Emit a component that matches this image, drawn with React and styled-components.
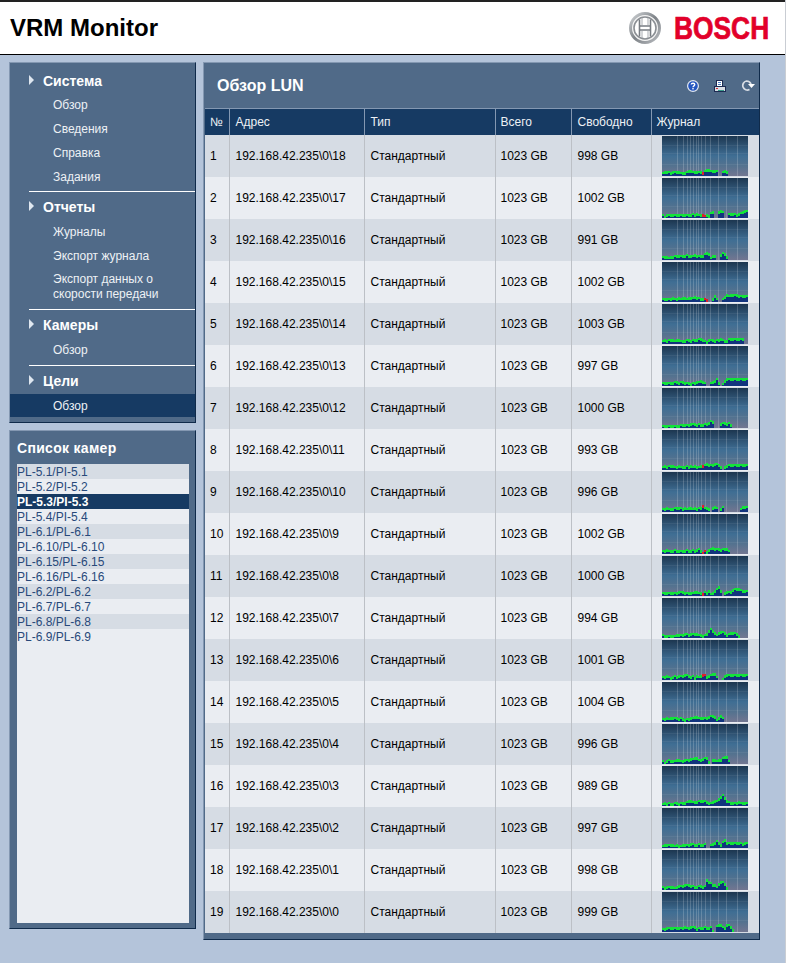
import React from "react";
import styled, { createGlobalStyle } from "styled-components";

const GlobalStyle = createGlobalStyle`
  html, body {
    margin: 0;
    padding: 0;
    background: #b4c4da;
    font-family: "Liberation Sans", Arial, sans-serif;
  }
`;

const Shell = styled.div`
  width: 785px;
  height: 963px;
  border-right: 1px solid #c9cdd3;
  overflow: hidden;
`;
const Header = styled.header`
  height: 52px;
  background: #fff;
  border-top: 2px solid #222;
  border-bottom: 1px solid #000;
  display: flex;
  align-items: center;
  justify-content: space-between;
  padding: 0 16px 0 10px;
`;
const AppTitle = styled.h1`
  margin: 0;
  font-size: 24px;
  font-weight: bold;
  color: #000;
`;
const Logo = styled.div`
  display: flex;
  align-items: center;
  gap: 13px;
  margin-right: 1px;
`;
const Wordmark = styled.span`
  display: block;
  width: 94px;
  margin-top: 2px;
  font-size: 31px;
  line-height: 32px;
  font-weight: bold;
  color: #e2002a;
  -webkit-text-stroke: 0.7px #e2002a;
  transform: scaleX(0.85);
  transform-origin: left center;
  white-space: nowrap;
`;
const Content = styled.div`
  display: flex;
  gap: 7px;
  padding: 7px 0 0 9px;
`;
const Sidebar = styled.div`
  width: 187px;
  display: flex;
  flex-direction: column;
  gap: 7px;
`;
const Panel = styled.section`
  background: #506a88;
  border-top: 1px solid #8498b2;
  border-left: 1px solid #8498b2;
  border-right: 1px solid #0f2a4a;
  border-bottom: 1px solid #0f2a4a;
`;
const Nav = styled(Panel)`
  height: 361px;
  box-sizing: border-box;
  padding-top: 6px;
`;
const Group = styled.div`
  margin: ${(p) => p.$top}px 0 0 19px;
  border-top: 1px solid #fff;
  padding-top: 3px;
`;
const GroupTitle = styled.div`
  display: flex;
  align-items: center;
  height: 23px;
  padding-left: ${(p) => (p.$first ? 19 : 0)}px;
  margin-bottom: ${(p) => p.$gap}px;
  font-size: 14px;
  font-weight: bold;
  color: #fff;
`;
const Arrow = styled.span`
  width: 0;
  height: 0;
  margin: -2px 9px 0 0;
  border-left: 5px solid #dfe7f0;
  border-top: 5px solid transparent;
  border-bottom: 5px solid transparent;
`;
const NavItem = styled.div`
  padding: ${(p) => (p.$wrap ? "4px 0 5px" : "0")};
  padding-left: ${(p) => (p.$active ? 43 : p.$first ? 43 : 24)}px;
  margin-left: ${(p) => (p.$active ? -19 : 0)}px;
  height: ${(p) => (p.$wrap ? "auto" : p.$active ? "23px" : "24px")};
  line-height: ${(p) => (p.$wrap ? "15px" : p.$active ? "25px" : "24px")};
  font-size: 12px;
  color: #edf1f5;
  background: ${(p) => (p.$active ? "#163a63" : "transparent")};
`;
const CameraPanel = styled(Panel)`
  height: 499px;
  box-sizing: border-box;
  padding: 0 6px 5px 7px;
  display: flex;
  flex-direction: column;
`;
const CameraTitle = styled.div`
  height: 33px;
  line-height: 35px;
  font-size: 14px;
  font-weight: bold;
  letter-spacing: 0.3px;
  color: #fff;
`;
const CameraList = styled.div`
  flex: 1;
  background: #eaedf2;
`;
const CameraRow = styled.div`
  height: 15px;
  line-height: 16px;
  font-size: 12px;
  font-weight: ${(p) => (p.$active ? "bold" : "normal")};
  color: ${(p) => (p.$active ? "#fff" : "#28497a")};
  background: ${(p) => (p.$active ? "#163a63" : p.$odd ? "#d6dce4" : "#eaedf2")};
`;
const Main = styled(Panel)`
  width: 557px;
  height: 878px;
  box-sizing: border-box;
  padding-left: 1px;
`;
const MainHead = styled.div`
  height: 46px;
  display: flex;
  align-items: center;
  justify-content: space-between;
  padding: 0 3px 0 12px;
  box-sizing: border-box;
  border-bottom: 1px solid #8498b2;
`;
const MainTitle = styled.h2`
  margin: 0;
  font-size: 16px;
  font-weight: bold;
  color: #fff;
`;
const Tools = styled.div`
  display: flex;
  align-items: center;
  gap: 15px;
`;
const Table = styled.table`
  width: 554px;
  border-collapse: collapse;
  table-layout: fixed;
  font-size: 12px;
`;
const Th = styled.th`
  height: 26px;
  padding: 0 0 0 ${(p) => p.$pad || 5}px;
  box-sizing: border-box;
  text-align: left;
  font-weight: normal;
  color: #edf1f5;
  background: #163a63;
  border-right: 1px solid #8498b2;
  &:last-child {
    border-right: 0;
  }
`;
const Tr = styled.tr`
  background: ${(p) => (p.$odd ? "#d6dce4" : "#eaedf2")};
`;
const Td = styled.td`
  height: 42px;
  padding: 0 0 0 ${(p) => p.$pad || 5}px;
  box-sizing: border-box;
  color: #000;
  border-right: 1px solid #bcc0c6;
  &:last-child {
    border-right: 0;
    padding: 0 0 0 10px;
  }
`;
const ChartSvg = styled.svg`
  display: block;
  width: 86px;
  height: 40px;
`;

const VLINES = [15, 21, 25, 28, 31, 34, 36, 39, 43, 48, 56, 64, 75];

const rows = [
  ["998", "344434444333455444443 566 5555 00 454", [20]],
  ["1002", "3133333333 3333343433 3232 56 00 676 00 4444345 677", [20, 21]],
  ["991", "3332334444 4454445444 4 676 244 00 5763", []],
  ["1002", "333334334344344454433 32 00 363 00 3576777766666", [21, 22]],
  ["1003", "3434443443 3344344455 4324443445 4335555555 5", []],
  ["997", "3333334434 4333233445 43 00 3457 30 25 77777777777", []],
  ["1000", "2222222223 3333444343 344 576 000 455453", []],
  ["993", "3434443343 3343434334 4 56555665 3 0 3 45555555555", [20]],
  ["996", "3343334444 3434434344 6443 0 454 0 35 00000000 3555", [20]],
  ["1002", "3343334333 3343343453 13 245 655 545553", [20, 21]],
  ["1000", "3333333344 4333334433 243 52 35795 0 3 44467776 5 5 5", [20]],
  ["994", "3222222333 3443444433 23 47975 3 5665 3 45554 2", []],
  ["1001", "3343234344 4554342434 55 34 566 3 00 1 45555555555 5", [20, 21]],
  ["1004", "3343444434 3233445544 444 5665 2 464", []],
  ["996", "3134333443 3444556644 566 2 0 44344 677 3", []],
  ["989", "2323223323 3345544455 5543 34 55 79b8 5 4333343333", []],
  ["997", "2333332322 3333443343 34 00 34 575 3 68 5 5555555455", []],
  ["998", "3233332344 4555443344 34 a875 53 6886 2", []],
  ["999", "3344444444 4544555344 4 5445 1 0 6775 4 77 5 2", []],
];

function Chart({ data, red }) {
  const cols = data.replace(/ /g, "").slice(0, 43).split("");
  return (
    <ChartSvg viewBox="0 0 86 40" shapeRendering="crispEdges">
      <rect width="86" height="40" fill="url(#chartBg)" />
      {[9, 17, 28].map((y) => (
        <rect key={y} y={y} width="86" height="1" fill="#fff" opacity="0.06" />
      ))}
      {VLINES.map((x) => (
        <rect key={x} x={x} width="1" height="40" fill="#fff" opacity="0.18" />
      ))}
      {cols.map((c, i) => {
        const v = parseInt(c, 16);
        if (!v) return null;
        const h = v + 1;
        const edge = i % 3 === 0 ? 2 : 3;
        return (
          <g key={i}>
            <rect x={i * 2} y={40 - h} width="2" height={h} fill="#12347e" />
            <rect x={i * 2} y={40 - h} width="2" height={edge} fill={red.includes(i) ? "#e0202a" : "#12e23a"} />
          </g>
        );
      })}
    </ChartSvg>
  );
}

function BoschMark() {
  return (
    <svg width="32" height="32" viewBox="0 0 32 32">
      <defs>
        <linearGradient id="ring" x1="0" y1="0" x2="1" y2="1">
          <stop offset="0" stopColor="#d0d3d6" />
          <stop offset="0.5" stopColor="#7d8287" />
          <stop offset="1" stopColor="#b9bcc0" />
        </linearGradient>
      </defs>
      <circle cx="16" cy="16" r="14.5" fill="#f4f4f4" stroke="url(#ring)" strokeWidth="3" />
      <circle cx="16" cy="16" r="11" fill="#fff" stroke="#8b8f94" strokeWidth="1.6" />
      <path
        d="M10.5 7.5V24.5M21.5 7.5V24.5M10.5 14H21.5M10.5 18H21.5"
        fill="none"
        stroke="#777c82"
        strokeWidth="1.6"
      />
      <path d="M13 6V13M19 6V13M13 19V26M19 19V26" fill="none" stroke="#a9adb2" strokeWidth="1" />
    </svg>
  );
}

function HelpIcon() {
  return (
    <svg width="12" height="12" viewBox="0 0 12 12">
      <circle cx="6" cy="6" r="5.4" fill="#2456c0" stroke="#e4e9f2" strokeWidth="1.2" />
      <path d="M4.2 4.6C4.2 2.8 7.8 2.8 7.8 4.6C7.8 5.9 6 5.8 6 7.2" fill="none" stroke="#fff" strokeWidth="1.3" />
      <rect x="5.3" y="8" width="1.4" height="1.4" fill="#fff" />
    </svg>
  );
}

function PrintIcon() {
  return (
    <svg width="12" height="12" viewBox="0 0 12 12" shapeRendering="crispEdges">
      <rect x="2.5" y="0.5" width="6" height="7" fill="#fff" stroke="#1d2a52" />
      <rect x="4" y="2" width="3" height="1" fill="#4e7fc8" />
      <rect x="4" y="4" width="3" height="1" fill="#4e7fc8" />
      <rect x="0.5" y="6.5" width="11" height="5" fill="#d8dde4" stroke="#1d2a52" />
      <rect x="2" y="8" width="2" height="1" fill="#d62a3a" />
      <rect x="4" y="10" width="6" height="1" fill="#3a9a8a" />
    </svg>
  );
}

function RefreshIcon() {
  return (
    <svg width="15" height="11" viewBox="1 0 15 11">
      <path d="M9.5 9.6A4.6 4.6 0 1 1 6.5 1C8.6 1 10.3 2.2 11 4.2" fill="none" stroke="#d9dee5" strokeWidth="1.7" />
      <path d="M8 4H15L11.5 8Z" fill="#fff" />
    </svg>
  );
}

const cameras = [
  "PL-5.1/PI-5.1",
  "PL-5.2/PI-5.2",
  "PL-5.3/PI-5.3",
  "PL-5.4/PI-5.4",
  "PL-6.1/PL-6.1",
  "PL-6.10/PL-6.10",
  "PL-6.15/PL-6.15",
  "PL-6.16/PL-6.16",
  "PL-6.2/PL-6.2",
  "PL-6.7/PL-6.7",
  "PL-6.8/PL-6.8",
  "PL-6.9/PL-6.9",
];

export default function App() {
  return (
    <Shell>
      <GlobalStyle />
      <svg width="0" height="0" style={{ position: "absolute" }}>
        <defs>
          <linearGradient id="chartBg" x1="0" y1="0" x2="0" y2="1">
            <stop offset="0" stopColor="#1c3650" />
            <stop offset="0.2" stopColor="#2b4d6c" />
            <stop offset="0.5" stopColor="#3f6e94" />
            <stop offset="0.75" stopColor="#54728f" />
            <stop offset="1" stopColor="#727691" />
          </linearGradient>
        </defs>
      </svg>
      <Header>
        <AppTitle>VRM Monitor</AppTitle>
        <Logo>
          <BoschMark />
          <Wordmark>BOSCH</Wordmark>
        </Logo>
      </Header>
      <Content>
        <Sidebar>
          <Nav>
            <div>
              <GroupTitle $first $gap={1}>
                <Arrow />
                Система
              </GroupTitle>
              <NavItem $first>Обзор</NavItem>
              <NavItem $first>Сведения</NavItem>
              <NavItem $first>Справка</NavItem>
              <NavItem $first>Задания</NavItem>
            </div>
            <Group $top={2}>
              <GroupTitle $gap={2}>
                <Arrow />
                Отчеты
              </GroupTitle>
              <NavItem>Журналы</NavItem>
              <NavItem>Экспорт журнала</NavItem>
              <NavItem $wrap>
                Экспорт данных о
                <br />
                скорости передачи
              </NavItem>
            </Group>
            <Group $top={2}>
              <GroupTitle $gap={2}>
                <Arrow />
                Камеры
              </GroupTitle>
              <NavItem>Обзор</NavItem>
            </Group>
            <Group $top={3}>
              <GroupTitle $gap={2}>
                <Arrow />
                Цели
              </GroupTitle>
              <NavItem $active>Обзор</NavItem>
            </Group>
          </Nav>
          <CameraPanel>
            <CameraTitle>Список камер</CameraTitle>
            <CameraList>
              {cameras.map((c, i) => (
                <CameraRow key={c} $odd={i % 2 === 0} $active={i === 2}>
                  {c}
                </CameraRow>
              ))}
            </CameraList>
          </CameraPanel>
        </Sidebar>
        <Main>
          <MainHead>
            <MainTitle>Обзор LUN</MainTitle>
            <Tools>
              <HelpIcon />
              <PrintIcon />
              <RefreshIcon />
            </Tools>
          </MainHead>
          <Table>
            <colgroup>
              <col style={{ width: 24 }} />
              <col style={{ width: 135 }} />
              <col style={{ width: 131 }} />
              <col style={{ width: 76 }} />
              <col style={{ width: 80 }} />
              <col style={{ width: 108 }} />
            </colgroup>
            <thead>
              <tr>
                <Th>№</Th>
                <Th $pad={6}>Адрес</Th>
                <Th $pad={6}>Тип</Th>
                <Th>Всего</Th>
                <Th $pad={6}>Свободно</Th>
                <Th>Журнал</Th>
              </tr>
            </thead>
            <tbody>
              {rows.map(([free, data, red], i) => (
                <Tr key={i} $odd={i % 2 === 0}>
                  <Td>{i + 1}</Td>
                  <Td $pad={6}>{`192.168.42.235\\0\\${18 - i}`}</Td>
                  <Td $pad={6}>Стандартный</Td>
                  <Td>1023 GB</Td>
                  <Td $pad={6}>{free} GB</Td>
                  <Td>
                    <Chart data={data} red={red} />
                  </Td>
                </Tr>
              ))}
            </tbody>
          </Table>
        </Main>
      </Content>
    </Shell>
  );
}
